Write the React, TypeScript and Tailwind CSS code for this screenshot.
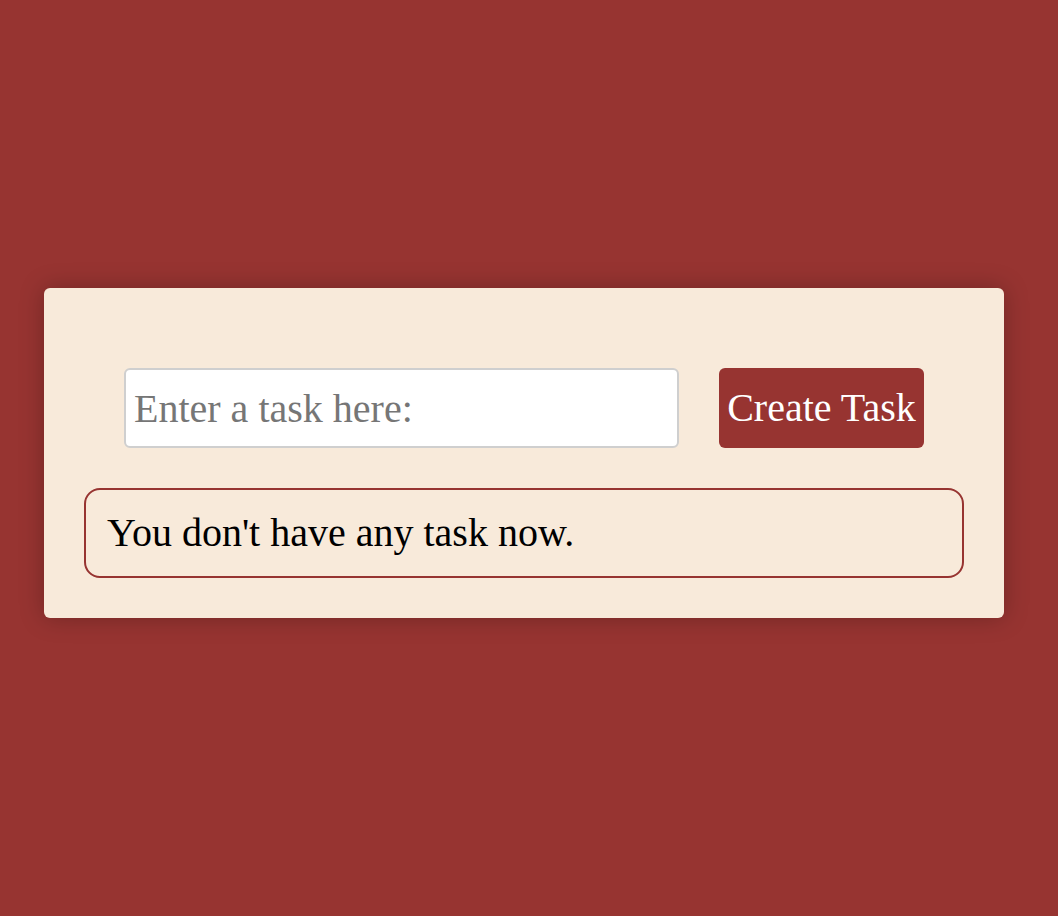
import { useState } from "react";

const App = () => {
  const [task, setTask] = useState("");

  return (
    <div className="min-h-[916px] bg-[#973431] pt-[288px] pl-[44px] font-['Liberation_Serif',serif]">
      <div className="w-[960px] rounded-md bg-[#f8eada] p-10 shadow-[0_0_24px_rgba(0,0,0,0.25)]">
        {/* Input row */}
        <div className="mt-10 mb-10 flex items-center justify-center gap-10">
          <input
            value={task}
            onChange={(e) => setTask(e.target.value)}
            placeholder="Enter a task here:"
            className="h-[80px] w-[555px] rounded-md border-2 border-[#cfcfcf] bg-white px-2 text-[40px] text-black outline-none placeholder:text-[#767676]"
          />
          <button className="h-[80px] w-[205px] rounded-md bg-[#973431] text-[40px] leading-none text-white">
            Create Task
          </button>
        </div>

        {/* Task list */}
        <div className="flex h-[90px] items-center rounded-2xl border-2 border-[#973431] px-[21px] text-[40px] text-black">
          You don't have any task now.
        </div>
      </div>
    </div>
  );
};

export default App;
